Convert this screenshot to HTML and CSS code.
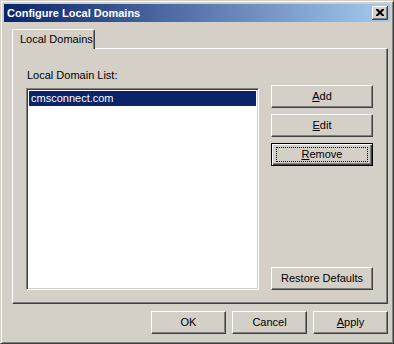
FILE: index.html
```html
<!DOCTYPE html>
<html>
<head>
<meta charset="utf-8">
<link rel="stylesheet" href="styles.css">
</head>
<body>
<div class="window">
  <div class="titlebar">
    <span class="title">Configure Local Domains</span>
    <span class="close"><svg width="8" height="7" viewBox="0 0 8 7"><path d="M0 0h2l2 2 2-2h2v1l-2.5 2.5L8 6v1H6L4 5 2 7H0V6l2.5-2.5L0 1z" fill="#000"/></svg></span>
  </div>
  <div class="client">
    <div class="tabs">
      <div class="tab">Local Domains</div>
    </div>
    <div class="panel">
      <div class="label">Local Domain List:</div>
      <div class="row">
        <div class="listbox">
          <div class="item selected">cmsconnect.com</div>
        </div>
        <div class="side">
          <div class="btn"><span class="u">A</span>dd</div>
          <div class="btn"><span class="u">E</span>dit</div>
          <div class="btn default"><span class="focus"><span class="u">R</span>emove</span></div>
          <div class="spacer"></div>
          <div class="btn">Restore Defaults</div>
        </div>
      </div>
    </div>
    <div class="footer">
      <div class="btn small">OK</div>
      <div class="btn small">Cancel</div>
      <div class="btn small"><span class="u">A</span>pply</div>
    </div>
  </div>
</div>
</body>
</html>
```

FILE: styles.css
```css
html, body {
  margin: 0;
  padding: 0;
  background: #d4d0c8;
}
body {
  font-family: "Liberation Sans", Arial, sans-serif;
  font-size: 11px;
  color: #000;
}
.window {
  width: 394px;
  height: 344px;
  box-sizing: border-box;
  background: #d4d0c8;
  border: 1px solid;
  border-color: #d4d0c8 #404040 #404040 #d4d0c8;
  box-shadow: inset 1px 1px #fff, inset -1px -1px #808080;
  padding: 3px;
  display: flex;
  flex-direction: column;
}
.titlebar {
  height: 18px;
  background: linear-gradient(to right, #0a246a, #a6caf0);
  display: flex;
  align-items: center;
  justify-content: space-between;
  padding: 0 2px 0 3px;
  flex: none;
}
.title {
  color: #fff;
  font-weight: bold;
  font-size: 11px;
  letter-spacing: 0;
}
.close {
  width: 16px;
  height: 14px;
  box-sizing: border-box;
  background: #d4d0c8;
  border-right: 1px solid #404040;
  border-bottom: 1px solid #404040;
  box-shadow: inset 1px 1px #fff, inset -1px -1px #808080;
  display: flex;
  align-items: center;
  justify-content: center;
}
.close svg { display: block; margin-left: 0; }
.client {
  flex: 1;
  display: flex;
  flex-direction: column;
  padding: 0 2px 0 8px;
}
.tabs {
  display: flex;
  margin-top: 7px;
  height: 19px;
  position: relative;
  z-index: 1;
}
.tab {
  width: 83px;
  height: 20px;
  box-sizing: border-box;
  border-top: 1px solid #fff;
  border-left: 1px solid #fff;
  border-right: 1px solid #404040;
  border-radius: 2px 2px 0 0;
  box-shadow: inset -1px 0 #808080;
  background: #d4d0c8;
  padding: 3px 0 0 7px;
  line-height: 13px;
}
.panel {
  height: 256px;
  width: 376px;
  box-sizing: border-box;
  border-top: 1px solid #fff;
  border-left: 1px solid #fff;
  border-right: 1px solid #404040;
  border-bottom: 1px solid #404040;
  box-shadow: inset -1px -1px #808080;
  padding: 20px 13px 13px 13px;
  display: flex;
  flex-direction: column;
}
.label {
  line-height: 13px;
  padding-left: 1px;
}
.row {
  display: flex;
  margin-top: 3px;
  height: 205px;
}
.listbox {
  width: 233px;
  height: 202px;
  margin-top: 3px;
  box-sizing: border-box;
  background: #fff;
  border-top: 1px solid #808080;
  border-left: 1px solid #808080;
  border-right: 1px solid #fff;
  border-bottom: 1px solid #fff;
  box-shadow: inset 1px 1px #404040, inset -1px -1px #d4d0c8;
  padding: 2px;
}
.item {
  height: 15px;
  line-height: 15px;
  padding-left: 2px;
}
.item.selected {
  background: #0a246a;
  color: #fff;
}
.side {
  width: 102px;
  margin-left: 12px;
  display: flex;
  flex-direction: column;
  gap: 6px;
}
.spacer { flex: 1; }
.btn {
  height: 23px;
  box-sizing: border-box;
  background: #d4d0c8;
  border-top: 1px solid #fff;
  border-left: 1px solid #fff;
  border-right: 1px solid #404040;
  border-bottom: 1px solid #404040;
  box-shadow: inset -1px -1px #808080;
  display: flex;
  align-items: center;
  justify-content: center;
  line-height: 13px;
  flex: none;
}
.btn.default {
  border: 1px solid #000;
  box-shadow: inset 1px 1px #fff, inset -1px -1px #404040, inset -2px -2px #808080;
}
.focus {
  display: flex;
  align-items: center;
  justify-content: center;
  width: 92px;
  height: 15px;
  box-sizing: border-box;
  border: 1px dotted #000;
}
.u { text-decoration: underline; }
.footer {
  display: flex;
  justify-content: flex-end;
  gap: 6px;
  margin-top: 7px;
  padding-right: 0;
}
.btn.small { width: 75px; }
```
